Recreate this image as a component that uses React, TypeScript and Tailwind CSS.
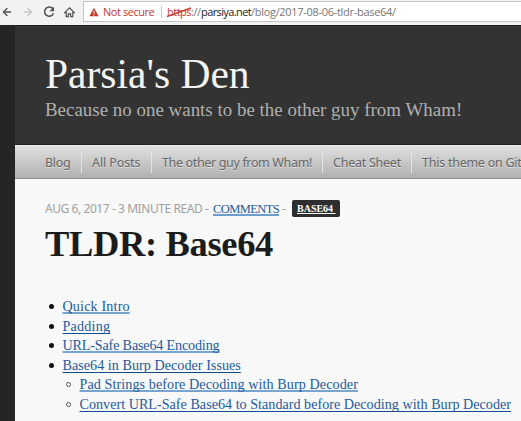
import { ArrowLeft, ArrowRight } from "lucide-react";

const navItems = [
  { label: "Blog", style: "w-[47px] tracking-[-0.3px]" },
  { label: "All Posts", style: "w-[70px] tracking-[-0.1px]" },
  { label: "The other guy from Wham!", style: "w-[171px] tracking-[-0.35px]" },
  { label: "Cheat Sheet", style: "w-[89px] tracking-[-0.25px]" },
  { label: "This theme on Git", style: "w-[110px] tracking-[-0.25px]" },
];

const thick = "decoration-[#78a4d0] decoration-2 underline-offset-1";
const thin = "decoration-[#0f4d94] decoration-1 underline-offset-2";

const topLinks = [
  { label: "Quick Intro", style: `${thick} tracking-[0.15px]` },
  { label: "Padding", style: `${thin} tracking-[0.2px]` },
  { label: "URL-Safe Base64 Encoding", style: `${thick} tracking-[-0.17px]` },
  { label: "Base64 in Burp Decoder Issues", style: `${thin} tracking-[0.03px]` },
];

const subLinks = [
  { label: "Pad Strings before Decoding with Burp Decoder", style: `${thick} tracking-[0.08px]` },
  {
    label: "Convert URL-Safe Base64 to Standard before Decoding with Burp Decoder",
    style: `${thin} tracking-[0.01px]`,
  },
];

function TocLink({ label, style }: { label: string; style: string }) {
  return (
    <a className={`whitespace-nowrap text-[#225b9b] underline [text-decoration-skip-ink:none] ${style}`}>{label}</a>
  );
}

function BrowserBar() {
  return (
    <div className="flex h-[25px] items-start bg-[#f2f2f2]">
      <div className="flex h-[23px] w-[83px] shrink-0 items-center text-[#505050]">
        <ArrowLeft className="ml-px size-3" strokeWidth={2.7} />
        <ArrowRight className="ml-[9px] size-3 text-[#c6c6c6]" strokeWidth={2.7} />
        <svg className="ml-[9px] size-3" viewBox="0 0 12 12" fill="none" stroke="currentColor" strokeWidth="1.5">
          <path d="M10.1 3.2A4.6 4.6 0 1 0 10.5 7.3" />
          <path d="M11 .7v4.5H6.5z" fill="currentColor" stroke="none" />
        </svg>
        <svg className="ml-[9px] h-3 w-[11px]" viewBox="0 0 11 12" fill="none" stroke="currentColor" strokeWidth="1.2">
          <path d="M.7 6.7 5.5 1.9l4.8 4.8H8.8v4H6.7V7.9H4.3v2.8H2.2v-4z" />
        </svg>
      </div>
      <div className="mt-px flex h-[21px] flex-1 items-center border border-r-0 border-[#c5c5c5] bg-white font-['Open_Sans',sans-serif] text-[11px] leading-[19px]">
        <svg className="ml-[5px] size-[10px] shrink-0" viewBox="0 0 10 10">
          <path d="M5 .7 9.6 9.3H.4z" fill="#c5392a" />
          <path d="M5 3.8v2.7M5 7.3v1.2" stroke="#fff" strokeWidth="1" />
        </svg>
        <span className="ml-1 w-[58px] shrink-0 whitespace-nowrap tracking-[-0.45px] text-[#c5392a]">Not secure</span>
        <span className="h-3 w-px shrink-0 bg-[#c4c4c4]" />
        <span className="relative ml-[5px] w-[24px] shrink-0 whitespace-nowrap tracking-[-0.5px] text-[#c5392a]">
          https
          <svg className="absolute left-0 top-1 h-3 w-[25px]" viewBox="0 0 25 12">
            <path d="M0 10.5 24 2" stroke="#c5392a" strokeWidth="1.4" />
          </svg>
        </span>
        <span className="w-[10px] shrink-0 whitespace-nowrap tracking-[-0.4px] text-[#777]">://</span>
        <span className="w-[50px] shrink-0 whitespace-nowrap tracking-[-0.6px] text-[#222]">parsiya.net</span>
        <span className="whitespace-nowrap tracking-[-0.3px] text-[#777]">/blog/2017-08-06-tldr-base64/</span>
      </div>
    </div>
  );
}

export default function App() {
  return (
    <div className="flex h-[421px] w-[521px] flex-col overflow-hidden bg-[#f8f8f8] font-['Liberation_Serif',serif]">
      <BrowserBar />
      <div className="flex min-h-0 flex-1">
        <aside className="w-[15px] shrink-0 bg-[#252525]" />
        <div className="min-w-0 flex-1">
          <header className="h-[120px] border-y border-[#202020] bg-[#333] pl-[30px] pt-[25px]">
            <h1 className="h-[46px] whitespace-nowrap text-[41.5px] leading-[46px] text-[#f4f4f4]">Parsia's Den</h1>
            <p className="mt-0.5 h-[22px] whitespace-nowrap text-[18.9px] leading-[22px] tracking-[0.02px] text-[#b0b0b0]">
              Because no one wants to be the other guy from Wham!
            </p>
          </header>
          <nav className="flex h-[34px] items-start overflow-hidden border-y border-t-[#eee] border-b-[#929292] bg-linear-to-b from-[#e0e0e0] to-[#b0b0b0] pl-[20px] pt-[5px] font-['Noto_Sans',sans-serif] text-[12.5px] text-[#666]">
            {navItems.map((item) => (
              <a
                key={item.label}
                className={`${item.style} h-[22px] shrink-0 whitespace-nowrap border-r border-[#e4e4e4] pl-[10px] leading-[24px] [text-shadow:0_1px_0_#e0e0e0]`}
              >
                {item.label}
              </a>
            ))}
          </nav>
          <main className="pl-[30px] pt-[21px]">
            <div className="flex h-[18px] items-center whitespace-nowrap font-['Noto_Sans',sans-serif] text-[12px] leading-[18px] text-[#a0a0a0]">
              <span className="w-[168px] tracking-[-0.43px]">AUG 6, 2017 - 3 MINUTE READ -</span>
              <a className="w-[66px] font-['Liberation_Serif',serif] text-[12.5px] tracking-[-0.6px] text-[#225b9b] underline decoration-[#6d9dcc] decoration-2 underline-offset-1">
                COMMENTS
              </a>
              <span className="ml-[3px] w-[10px]">-</span>
              <a className="mb-px h-[17px] w-12 rounded-xs bg-[#2e2e2e] pl-[5px] font-['Liberation_Serif',serif] text-[10px] font-bold leading-[17px] text-white underline [white-space:pre]">
                {"BASE64 "}
              </a>
            </div>
            <h2 className="mt-[5px] h-[42px] whitespace-nowrap text-[36.5px] font-bold leading-[42px] tracking-[-0.35px] text-[#1c1c1c]">
              TLDR: Base64
            </h2>
            <ul className="mt-8 text-[14.15px] leading-[19.5px]">
              {topLinks.map((link) => (
                <li key={link.label} className="flex items-center pl-1">
                  <span className="mr-[8.5px] size-[5px] rounded-full bg-[#111]" />
                  <TocLink {...link} />
                </li>
              ))}
              {subLinks.map((link) => (
                <li key={link.label} className="flex items-center pl-[21px]">
                  <span className="mr-[8.5px] size-[5px] rounded-full border border-[#555]" />
                  <TocLink {...link} />
                </li>
              ))}
            </ul>
          </main>
        </div>
      </div>
    </div>
  );
}
